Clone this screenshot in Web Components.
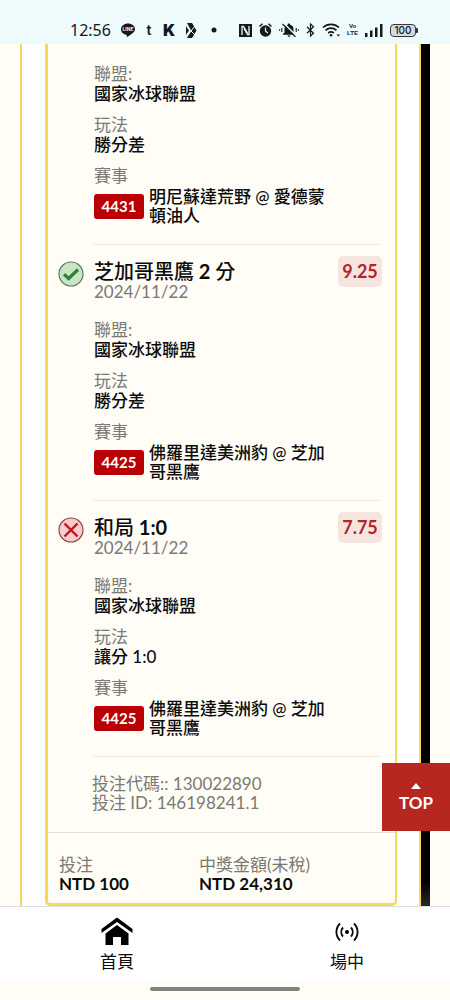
<!DOCTYPE html>
<html lang="zh-Hant">
<head>
<meta charset="utf-8">
<meta name="viewport" content="width=device-width, initial-scale=1">
<title>投注紀錄</title>
<style>
  html, body { margin: 0; }
  body {
    background: #fffdf5;
    color: #0c0c0c;
    font-family: Lato, "Noto Sans CJK TC", sans-serif;
  }
</style>
</head>
<body>
<bet-app></bet-app>

<script>
const define = (name, html, setup) => {
  const template = document.createElement('template');
  template.innerHTML = html;
  customElements.define(name, class extends HTMLElement {
    constructor() {
      super();
      this.attachShadow({ mode: 'open' }).append(template.content.cloneNode(true));
    }
    connectedCallback() { if (setup) setup(this, this.shadowRoot); }
  });
};

define('status-bar', `
  <style>
    :host { display: flex; justify-content: space-between; align-items: center; box-sizing: border-box;
      height: 44px; padding: 16px 34px 0 70px; background: #eefafc; color: #15191b; }
    div { display: flex; align-items: center; }
    svg { display: block; flex: none; fill: currentColor; }
    .left { gap: 10px; }
    .right { gap: 7px; }
    time { font: 400 16px/20px "Noto Sans", sans-serif; }
    .line { font: 700 5px/5px Inter, sans-serif; }
    .t { font: 600 14px/16px Inter, sans-serif; width: 8px; text-align: center; }
    .k { font: 900 16px/16px Inter, sans-serif; width: 13px; }
    .volte { font: 700 6px/7px "Liberation Sans", sans-serif; text-align: center; width: 11px; }
    .battery { box-sizing: border-box; width: 26px; height: 13px; border: 1px solid #30363a; border-radius: 4px;
      background: #d3dde0; font: 500 10px/11px Inter, sans-serif; justify-content: center; position: relative; }
    .battery::after { content: ""; position: absolute; right: -3px; top: 3px; width: 2px; height: 5px; background: #30363a; border-radius: 0 1px 1px 0; }
  </style>
  <div class="left">
    <time>12:56</time>
    <svg width="14" height="14" viewBox="0 0 14 14"><path d="M7 .5C3.100.5 0 3 0 6.200c0 2.900 2.300 5.100 5.500 5.500l.3 2.200c2.600-1.300 8.200-4.400 8.200-7.700C14 3 10.900.5 7 .5z"/><text class="line" x="7" y="8" text-anchor="middle" fill="#eefafc">LINE</text></svg>
    <span class="t">t</span>
    <span class="k">K</span>
    <svg width="11" height="15" viewBox="0 0 11 15"><path d="M1 0h5l4.500 7.500L6 15H1l4-7.500z"/><path d="M0 3l3 4.500L0 12z"/><path d="M1 4l8 8M9 3L2 12" stroke="#eefafc" stroke-width="1"/></svg>
    <svg width="16" height="6" viewBox="0 0 16 6"><circle cx="7" cy="3" r="2.500"/></svg>
  </div>
  <div class="right">
    <svg width="13" height="13" viewBox="0 0 13 13"><path d="M0 0h13v13H0z"/><path d="M3 11V2.500h1.500l4 6.500M10 2v8.500H8.500L5 4.500" fill="none" stroke="#eefafc" stroke-width="1.300"/></svg>
    <svg width="13" height="14" viewBox="0 0 13 14"><circle cx="6.500" cy="8" r="5.700"/><path d="M.5 3.500L3.500.8M12.500 3.500L9.500.8" stroke="currentColor" stroke-width="1.500"/><path d="M6.500 4.500V8l2.300 2" fill="none" stroke="#eefafc" stroke-width="1.200"/></svg>
    <svg width="20" height="14" viewBox="0 0 20 14"><path d="M10 .5c-.8 0-1.200.5-1.200 1.200C6.500 2.300 5.500 4 5.500 6v3.500L4 11v.7h12V11l-1.500-1.500V6c0-2-1-3.700-3.300-4.300C11.200 1 10.800.5 10 .5zM8.500 12.500h3c0 .8-.7 1.400-1.500 1.400s-1.500-.6-1.500-1.400z"/><path d="M4.500 0l13 13" stroke="#eefafc" stroke-width="1.500"/><path d="M3.500 1l13 13M2.800 5v4M17.200 5v4M.6 6.200v1.600M19.400 6.200v1.600" stroke="currentColor" stroke-width="1.100"/></svg>
    <svg width="9" height="14" viewBox="0 0 9 14"><path d="M1 3.800l6.500 6.400L4.500 13V1l3 2.800L1 10.200" fill="none" stroke="currentColor" stroke-width="1.200"/></svg>
    <svg width="18" height="14" viewBox="0 0 18 14"><path d="M1 4.500c4.500-4.200 11.500-4.200 16 0M3.500 7.300c3.200-2.900 7.800-2.900 11 0M6.200 10c1.700-1.500 3.900-1.500 5.600 0" fill="none" stroke="currentColor" stroke-width="1.700"/><circle cx="9" cy="12.300" r="1.300"/><path d="M14.500 11.500h3.500l-1.700 2z"/></svg>
    <span class="volte">Vo<br>LTE</span>
    <svg width="18" height="13" viewBox="0 0 18 13"><path d="M0 9h2.500v4H0zM5 6.500h2.500V13H5zM10 3.500h2.500V13H10zM15 0h2.500v13H15z"/></svg>
    <div class="battery">100</div>
  </div>`);

define('status-icon', `
  <style>
    :host { display: block; width: 26px; height: 26px; }
    svg { display: none; }
    :host([result="won"]) .won, :host([result="lost"]) .lost { display: block; }
  </style>
  <svg class="won" width="26" height="26" viewBox="0 0 26 26" role="img" aria-label="贏"><circle cx="13" cy="13" r="12" fill="#c9e5c5" stroke="#5c7c59" stroke-width="1.200"/><path d="M6 13.200l4.700 4.300L20 8.500" fill="none" stroke="#2f8131" stroke-width="3.200"/></svg>
  <svg class="lost" width="26" height="26" viewBox="0 0 26 26" role="img" aria-label="輸"><circle cx="13" cy="13" r="12" fill="#f9cbca" stroke="#8c4645" stroke-width="1.200"/><path d="M6.500 6.500l13 13M19.500 6.500l-13 13" stroke="#c4121a" stroke-width="2.400"/></svg>`);

define('bet-field', `
  <style>
    :host { display: block; font-size: 17px; line-height: 20px; }
    .label { color: #7b7973; font-weight: 400; }
    .value { font-weight: 500; }
  </style>
  <div class="label"></div>
  <div class="value"><slot></slot></div>`,
  (el, root) => { root.querySelector('.label').textContent = el.getAttribute('label'); });

define('match-line', `
  <style>
    :host { display: flex; align-items: center; gap: 5px; max-width: 240px; padding-top: 1px; line-height: 19px; }
    b { flex: none; box-sizing: border-box; width: 50px; border-radius: 3px; background: #b90005; color: #fff;
      font-size: 15px; line-height: 25px; font-weight: 700; text-align: center; }
  </style>
  <b></b><span><slot></slot></span>`,
  (el, root) => { root.querySelector('b').textContent = el.getAttribute('code'); });

define('bet-leg', `
  <style>
    :host { display: grid; grid-template-columns: 26px 1fr; column-gap: 10px; padding: 0 15px 0 10px; }
    status-icon { margin-top: 16px; }
    .body { border-bottom: 1px solid #ece6df; padding-bottom: 19px; min-width: 0; }
    header { display: flex; justify-content: space-between; padding: 11px 0 19px; margin-right: -2px; }
    h2 { margin: 0; padding-top: 3px; font-size: 20px; line-height: 24px; font-weight: 500; }
    h2 b { font-weight: 700; }
    time { display: block; color: #7b7973; font-size: 17px; line-height: 18px; }
    output { align-self: flex-start; min-width: 44px; border-radius: 5px; background: #f6e5df; color: #b3262a;
      font-size: 18px; line-height: 31px; font-weight: 700; text-align: center; }
    .fields { display: grid; row-gap: 11px; }
    :host([continued]) header, :host([continued]) status-icon { display: none; }
    :host([continued]) .body { grid-column: 2; padding-top: 20px; }
  </style>
  <status-icon></status-icon>
  <div class="body">
    <header><div><h2></h2><time></time></div><output></output></header>
    <div class="fields"><slot></slot></div>
  </div>`,
  (el, root) => {
    root.querySelector('status-icon').setAttribute('result', el.getAttribute('result') || '');
    // Scores and figures inside the pick are set bolder than the team names.
    root.querySelector('h2').innerHTML = (el.getAttribute('pick') || '').replace(/[ \d:]+/g, '<b>$&</b>');
    root.querySelector('time').textContent = el.getAttribute('date') || '';
    root.querySelector('output').textContent = el.getAttribute('odds') || '';
  });

define('bet-slip', `
  <style>
    :host { display: block; border: solid #f8d957; border-width: 0 2px 3px 3px; border-radius: 0 0 5px 5px; background: #fffdf5; }
    .codes { padding: 17px 14px 20px 44px; color: #7b7973; font-size: 17px; line-height: 19px; font-weight: 400; }
    .totals { display: grid; grid-template-columns: 5fr 7fr; margin: 0; border-top: 1px solid #e2dfd9; padding: 22px 0 10px 11px; }
    dt { color: #7b7973; font-size: 17px; line-height: 19px; font-weight: 400; }
    dd { margin: 0; font-size: 17px; line-height: 19px; font-weight: 700; }
  </style>
  <slot></slot>
  <div class="codes"><div>投注代碼:: 130022890</div><div>投注 ID: 146198241.1</div></div>
  <dl class="totals">
    <div><dt>投注</dt><dd>NTD 100</dd></div>
    <div><dt>中獎金額(未稅)</dt><dd>NTD 24,310</dd></div>
  </dl>`);

define('top-button', `
  <style>
    :host { display: block; position: fixed; right: 0; bottom: 169px; }
    button { display: flex; flex-direction: column; align-items: center; gap: 3px; border: 0; width: 68px; padding: 20px 0 17px;
      background: #b7271f; color: #fff; font: 700 17px/22px Lato, sans-serif; cursor: pointer; }
    svg { display: block; }
  </style>
  <button type="button"><svg width="10" height="6" viewBox="0 0 10 6" fill="#fff"><path d="M0 6l5-6 5 6z"/></svg>TOP</button>`,
  (el, root) => { root.querySelector('button').onclick = () => scrollTo({ top: 0 }); });

define('bottom-nav', `
  <style>
    :host { display: block; background: #fff; border-top: 1px solid #dedee0; }
    nav { display: flex; justify-content: space-between; padding: 10px 69px 7px 83px; }
    a { display: flex; flex-direction: column; align-items: center; width: 68px; color: #0c0c0c; text-decoration: none;
      font-size: 17px; line-height: 22px; font-weight: 400; }
    svg { display: block; height: 34px; }
  </style>
  <nav>
    <a href="#home"><svg width="32" height="34" viewBox="0 0 32 34"><path d="M0.500 16V12L16 0.500 31.500 12v4L16 5z"/><path d="M4.500 16.500L16 8l11.500 8.500V28H20v-8h-8v8H4.500z"/></svg>首頁</a>
    <a href="#live"><svg width="24" height="34" viewBox="0 0 24 34"><circle cx="12" cy="15" r="2"/><path d="M8 10.500c-2.300 2.600-2.300 6.400 0 9M16 10.500c2.300 2.600 2.300 6.400 0 9M5 6.500c-4.800 5-4.800 12 0 17M19 6.500c4.800 5 4.800 12 0 17" fill="none" stroke="#0c0c0c" stroke-width="1.900"/></svg>場中</a>
  </nav>`);

define('gesture-bar', `
  <style>
    :host { display: flex; justify-content: center; padding: 7px 0 9px; background: #fffdf5; }
    span { width: 150px; height: 4px; border-radius: 2px; background: #82817b; }
  </style><span></span>`);

define('bet-app', `
  <style>
    :host { display: flex; flex-direction: column; min-height: 100vh; }
    main { flex: 1; padding: 0 20px; }
    .edge { padding-right: 9px; background: linear-gradient(#000 calc(100% - 26px), #272727); }
    .panel { border: solid #f8d957; border-width: 0 2px; padding: 0 22px 0 23px; background: #fff; }
  </style>
  <status-bar></status-bar>
  <main><div class="edge"><div class="panel">
    <bet-slip>
      <bet-leg continued>
        <bet-field label="聯盟:">國家冰球聯盟</bet-field>
        <bet-field label="玩法">勝分差</bet-field>
        <bet-field label="賽事"><match-line code="4431">明尼蘇達荒野 @ 愛德蒙頓油人</match-line></bet-field>
      </bet-leg>
      <bet-leg result="won" pick="芝加哥黑鷹 2 分" date="2024/11/22" odds="9.25">
        <bet-field label="聯盟:">國家冰球聯盟</bet-field>
        <bet-field label="玩法">勝分差</bet-field>
        <bet-field label="賽事"><match-line code="4425">佛羅里達美洲豹 @ 芝加哥黑鷹</match-line></bet-field>
      </bet-leg>
      <bet-leg result="lost" pick="和局 1:0" date="2024/11/22" odds="7.75">
        <bet-field label="聯盟:">國家冰球聯盟</bet-field>
        <bet-field label="玩法">讓分 1:0</bet-field>
        <bet-field label="賽事"><match-line code="4425">佛羅里達美洲豹 @ 芝加哥黑鷹</match-line></bet-field>
      </bet-leg>
    </bet-slip>
  </div></div></main>
  <bottom-nav></bottom-nav>
  <gesture-bar></gesture-bar>
  <top-button></top-button>`);
</script>
</body>
</html>
